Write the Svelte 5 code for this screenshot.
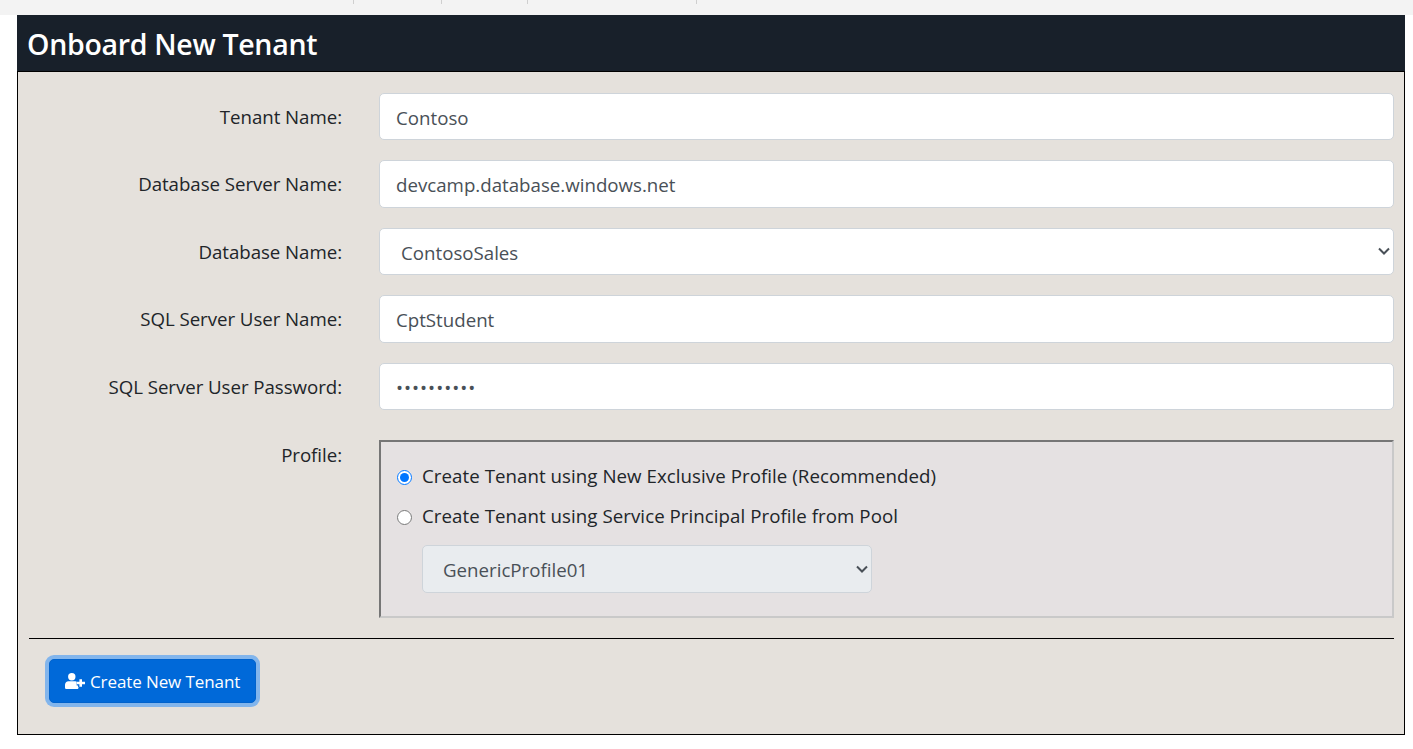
<script lang="ts">
    let tenantName = $state('Contoso');
    let serverName = $state('devcamp.database.windows.net');
    let databaseName = $state('ContosoSales');
    let userName = $state('CptStudent');
    let password = $state('Pa$$w0rd!!');
    let profileMode = $state('exclusive');
    let poolProfile = $state('GenericProfile01');
</script>

<div class="topbar">
    <span class="tab t1"></span>
    <span class="tab t2"></span>
    <span class="tab t3"></span>
    <span class="tab t4"></span>
</div>

<main class="page">
    <h1 class="heading">Onboard New Tenant</h1>
    <form class="card" onsubmit={(e) => e.preventDefault()}>
        <div class="row">
            <label class="label" for="tenant">Tenant Name:</label>
            <input id="tenant" class="control" type="text" bind:value={tenantName} />
        </div>
        <div class="row">
            <label class="label" for="server">Database Server Name:</label>
            <input id="server" class="control" type="text" bind:value={serverName} />
        </div>
        <div class="row">
            <label class="label" for="database">Database Name:</label>
            <select id="database" class="control select" bind:value={databaseName}>
                <option>ContosoSales</option>
                <option>ContosoHR</option>
            </select>
        </div>
        <div class="row">
            <label class="label" for="user">SQL Server User Name:</label>
            <input id="user" class="control" type="text" bind:value={userName} />
        </div>
        <div class="row">
            <label class="label" for="password">SQL Server User Password:</label>
            <input id="password" class="control secret" type="password" bind:value={password} />
        </div>
        <div class="row profile-row">
            <div class="label">Profile:</div>
            <fieldset class="profile">
                <label class="radio">
                    <input type="radio" name="profile" value="exclusive" bind:group={profileMode} />
                    Create Tenant using New Exclusive Profile (Recommended)
                </label>
                <label class="radio">
                    <input type="radio" name="profile" value="pool" bind:group={profileMode} />
                    Create Tenant using Service Principal Profile from Pool
                </label>
                <select class="control select pool" disabled bind:value={poolProfile}>
                    <option>GenericProfile01</option>
                    <option>GenericProfile02</option>
                </select>
            </fieldset>
        </div>
        <hr class="rule" />
        <button class="submit" type="submit">
            <svg class="icon" viewBox="0 0 20 16" aria-hidden="true">
                <circle cx="6.8" cy="3.8" r="3.7" fill="currentColor" />
                <path fill="currentColor" d="M3.5 8.200h6.600c2 0 3.400 1.600 3.400 3.600V14.400c0 .9-.7 1.600-1.600 1.600H1.600C.7 16 0 15.300 0 14.400V11.800c0-2 1.500-3.600 3.500-3.600z" />
                <path fill="none" stroke="#0069d9" stroke-width="5" d="M15.700 6v8M11.700 10h8" />
                <path fill="none" stroke="currentColor" stroke-width="2.600" d="M15.700 6.200v7.600M11.900 10h8.100" />
            </svg>
            <span>Create New Tenant</span>
        </button>
    </form>
</main>

<style>
    :global(body) {
        background: #fff;
        color: #212529;
        font-family: "Open Sans", "Noto Sans", sans-serif;
        font-size: 18.7px;
    }
    .topbar {
        height: 15px;
        background: #f3f3f3;
        display: flex;
    }
    .tab {
        height: 4px;
        box-sizing: border-box;
        border-right: 1px solid #cfcfcf;
    }
    .t1 { width: 354px; }
    .t2 { width: 88px; }
    .t3 { width: 86px; }
    .t4 { width: 169px; }

    .page {
        margin: 0 8px 0 17px;
    }
    .heading {
        margin: 0;
        height: 56px;
        box-sizing: border-box;
        padding-left: 10px;
        background: #18202a;
        color: #fff;
        font-size: 28.5px;
        font-weight: 600;
        line-height: 58px;
        letter-spacing: -0.3px;
    }
    .card {
        height: 664px;
        box-sizing: border-box;
        padding: 20.600px 10px 0 11px;
        background: #e5e1dc;
        border: 1px solid #000;
    }
    .row {
        display: grid;
        grid-template-columns: 313px 1fr;
        column-gap: 37px;
        margin-bottom: 20px;
    }
    .label {
        text-align: right;
        line-height: 48px;
        height: 47.500px;
        letter-spacing: -0.05px;
    }
    .control {
        display: block;
        width: 100%;
        height: 47.500px;
        box-sizing: border-box;
        padding: 8px 16px 6px;
        background: #fff;
        border: 1px solid #ced4da;
        border-radius: 5px;
        color: #495057;
        font: inherit;
    }
    .secret {
        letter-spacing: 1px;
    }
    .select {
        appearance: none;
        padding-left: 21px;
        background-image: url("data:image/svg+xml,%3Csvg xmlns='http://www.w3.org/2000/svg' viewBox='0 0 12 8'%3E%3Cpath fill='none' stroke='%23495057' stroke-width='2' d='M1 1.500l5 5 5-5'/%3E%3C/svg%3E");
        background-repeat: no-repeat;
        background-position: right 3px center;
        background-size: 12px 8px;
    }
    .profile-row {
        margin-top: 30px;
        margin-bottom: 20px;
    }
    .profile-row .label {
        line-height: 30px;
    }
    .profile {
        margin: 0;
        min-width: 0;
        height: 178px;
        box-sizing: border-box;
        padding: 14px 16px 0;
        background: #e5e1e2;
        border: 2px solid;
        border-color: #767676 #c9c9c9 #c9c9c9 #767676;
    }
    .radio {
        display: flex;
        align-items: center;
        gap: 10px;
        height: 40px;
        box-sizing: border-box;
        padding-bottom: 2px;
        letter-spacing: 0.05px;
    }
    .radio input {
        margin: 4px 0 0;
        width: 15px;
        height: 15px;
    }
    .pool {
        width: 450px;
        margin: 9px 0 0 25px;
        padding-left: 20px;
        background-color: #e9ecef;
        opacity: 1;
    }
    .rule {
        margin: 0 0 20px;
        border: 0;
        border-top: 1px solid #000;
    }
    .submit {
        display: flex;
        align-items: center;
        gap: 5px;
        margin-left: 20px;
        width: 207px;
        height: 44px;
        padding: 0 0 0 15px;
        box-sizing: border-box;
        background: #0069d9;
        color: #fff;
        border: 1px solid #0062cc;
        border-radius: 5px;
        box-shadow: 0 0 0 4px #82b5ec;
        font: inherit;
        font-size: 17px;
        letter-spacing: -0.1px;
    }
    .icon {
        width: 20px;
        height: 16px;
    }
</style>
